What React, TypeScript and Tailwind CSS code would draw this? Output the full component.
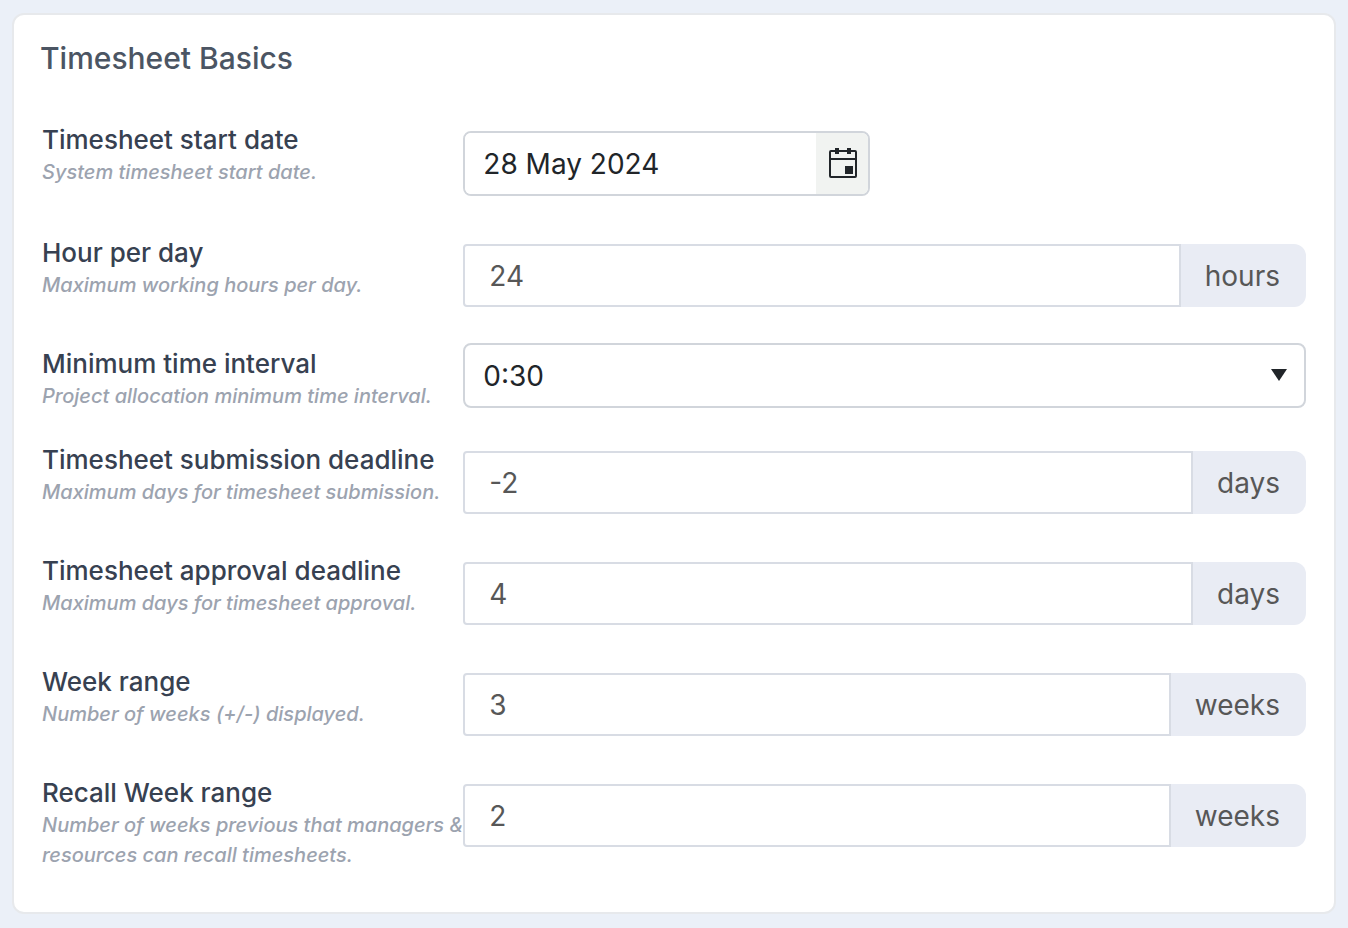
import { useId, useState } from "react";

type Field = {
  name: string;
  label: string;
  hint: string;
  value: string;
  kind: "date" | "number" | "select";
  unit?: string;
  rowClass?: string;
};

const FIELDS: Field[] = [
  {
    name: "startDate",
    label: "Timesheet start date",
    hint: "System timesheet start date.",
    value: "28 May 2024",
    kind: "date",
  },
  {
    name: "hoursPerDay",
    label: "Hour per day",
    hint: "Maximum working hours per day.",
    value: "24",
    kind: "number",
    unit: "hours",
    rowClass: "pb-1",
  },
  {
    name: "interval",
    label: "Minimum time interval",
    hint: "Project allocation minimum time interval.",
    value: "0:30",
    kind: "select",
    rowClass: "pb-0",
  },
  {
    name: "submissionDeadline",
    label: "Timesheet submission deadline",
    hint: "Maximum days for timesheet submission.",
    value: "-2",
    kind: "number",
    unit: "days",
  },
  {
    name: "approvalDeadline",
    label: "Timesheet approval deadline",
    hint: "Maximum days for timesheet approval.",
    value: "4",
    kind: "number",
    unit: "days",
  },
  {
    name: "weekRange",
    label: "Week range",
    hint: "Number of weeks (+/-) displayed.",
    value: "3",
    kind: "number",
    unit: "weeks",
  },
  {
    name: "recallWeekRange",
    label: "Recall Week range",
    hint: "Number of weeks previous that managers & resources can recall timesheets.",
    value: "2",
    kind: "number",
    unit: "weeks",
  },
];

const INTERVALS = ["0:15", "0:30", "1:00"];

type ControlProps = {
  id: string;
  hintId: string;
  value: string;
  onChange: (value: string) => void;
};

function CalendarIcon() {
  return (
    <svg width="30" height="31" viewBox="0 0 30 31" fill="none" aria-hidden="true">
      <rect x="2" y="3" width="26" height="26" rx="1" stroke="#212529" strokeWidth="2" />
      <path d="M2 11h26" stroke="#212529" strokeWidth="2" />
      <path d="M7 0h4v6H7zM19 0h4v6h-4zM17 18h8v8h-8z" fill="#212529" />
    </svg>
  );
}

function DateControl({ id, hintId, value, onChange }: ControlProps) {
  return (
    <div className="flex h-[65px] w-[407px] max-w-full overflow-hidden rounded-lg border-2 border-[#d1d5db]">
      <input
        id={id}
        aria-describedby={hintId}
        type="text"
        value={value}
        onChange={(event) => onChange(event.target.value)}
        className="min-w-0 flex-1 bg-white px-[18px] text-[28px] text-[#212529] outline-none"
      />
      <button
        type="button"
        aria-label="Open calendar"
        className="flex w-[52px] items-center justify-center bg-[#f1f3f1] pl-0.5"
      >
        <CalendarIcon />
      </button>
    </div>
  );
}

function SelectControl({ id, hintId, value, onChange }: ControlProps) {
  return (
    <div className="relative">
      <select
        id={id}
        aria-describedby={hintId}
        value={value}
        onChange={(event) => onChange(event.target.value)}
        className="block h-[65px] w-full appearance-none rounded-lg border-2 border-[#d1d5db] bg-white px-[18px] text-[28px] text-[#212529] outline-none"
      >
        {INTERVALS.map((interval) => (
          <option key={interval}>{interval}</option>
        ))}
      </select>
      <svg
        className="pointer-events-none absolute top-[26px] right-[19px]"
        width="16"
        height="12"
        viewBox="0 0 16 12"
        aria-hidden="true"
      >
        <path d="M0 0h16L8 12z" fill="#212529" />
      </svg>
    </div>
  );
}

function NumberControl({ id, hintId, value, onChange, unit }: ControlProps & { unit?: string }) {
  return (
    <div className="flex h-[63px]">
      <input
        id={id}
        aria-describedby={hintId}
        type="text"
        inputMode="numeric"
        value={value}
        onChange={(event) => onChange(event.target.value)}
        className="min-w-0 flex-1 rounded-l border-2 border-[#d8dce4] bg-white px-6 text-[28px] text-[#575757] outline-none"
      />
      <span className="flex items-center rounded-r-xl bg-[#e9ecf4] pr-[26px] pl-6 text-[28px] text-[#575757]">
        {unit}
      </span>
    </div>
  );
}

export default function App() {
  const baseId = useId();
  const [values, setValues] = useState<Record<string, string>>(() =>
    Object.fromEntries(FIELDS.map((field) => [field.name, field.value])),
  );

  return (
    <main className="min-h-screen bg-[#ebf0f8] px-3 py-[13px] font-['Inter',sans-serif]">
      <section
        aria-labelledby={`${baseId}-title`}
        className="rounded-xl border-2 border-[#e7e9ec] bg-white px-[26px] pt-6 pb-[34px]"
      >
        <h2
          id={`${baseId}-title`}
          className="text-[30px] leading-[38px] font-medium text-[#4b5563]"
        >
          Timesheet Basics
        </h2>

        <form
          className="mt-[46px] flex flex-col gap-8 px-0.5"
          onSubmit={(event) => event.preventDefault()}
        >
          {FIELDS.map((field) => {
            const id = `${baseId}-${field.name}`;
            const isSelect = field.kind === "select";
            const control = {
              id,
              hintId: `${id}-hint`,
              value: values[field.name],
              onChange: (value: string) => setValues({ ...values, [field.name]: value }),
            };

            return (
              <div
                key={field.name}
                className={`grid grid-cols-[1fr_2fr] ${field.rowClass ?? "pb-2"}`}
              >
                <div className={isSelect ? "pt-1" : ""}>
                  <label
                    htmlFor={id}
                    className="block text-[26px] leading-[34px] font-medium text-[#374151]"
                  >
                    {field.label}
                  </label>
                  <p
                    id={control.hintId}
                    className="text-[20px] leading-[30px] font-medium text-[#9ca3af] italic"
                  >
                    {field.hint}
                  </p>
                </div>
                <div className={isSelect ? "" : "pt-2"}>
                  {field.kind === "date" && <DateControl {...control} />}
                  {field.kind === "select" && <SelectControl {...control} />}
                  {field.kind === "number" && <NumberControl {...control} unit={field.unit} />}
                </div>
              </div>
            );
          })}
        </form>
      </section>
    </main>
  );
}
